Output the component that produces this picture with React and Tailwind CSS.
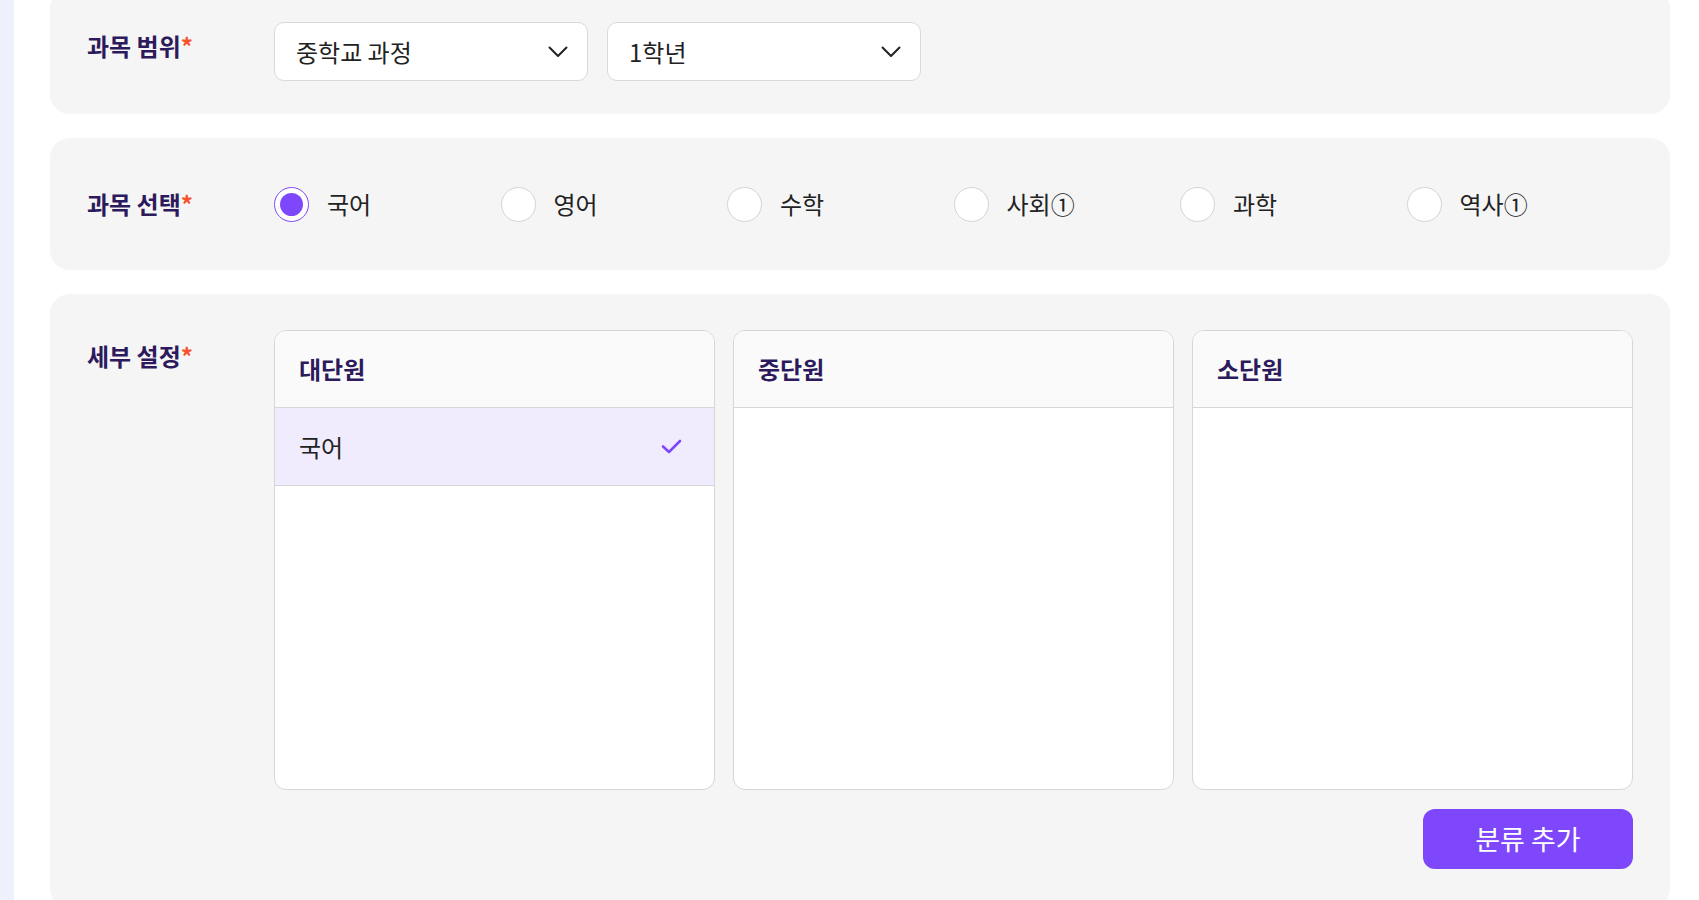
import { useState } from 'react';

const subjects = ['국어', '영어', '수학', '사회①', '과학', '역사①'];
const columns = ['대단원', '중단원', '소단원'];

function Chevron() {
  return (
    <svg width="20" height="12" viewBox="0 0 20 12" fill="none">
      <path d="M1.5 1.5 L10 10 L18.5 1.5" stroke="#222" strokeWidth="2" strokeLinecap="round" strokeLinejoin="round" />
    </svg>
  );
}

function Check() {
  return (
    <svg width="21" height="15" viewBox="0 0 21 15" fill="none">
      <path d="M2 7.5 L8 13 L19 2" stroke="#7f47fb" strokeWidth="2.6" strokeLinecap="round" strokeLinejoin="round" />
    </svg>
  );
}

function Label({ children, className = '' }) {
  return (
    <div className={`w-[187px] shrink-0 text-[24px] leading-[30px] font-semibold text-[#2d1a5c] ${className}`}>
      {children}
      <span className="text-[#f5532d]">*</span>
    </div>
  );
}

function Select({ value }) {
  return (
    <button
      type="button"
      className="flex h-[59px] w-[314px] items-center justify-between rounded-[10px] border border-[#d9d9d9] bg-white pl-[21px] pr-[19px] text-[24px] text-[#222]"
    >
      <span>{value}</span>
      <Chevron />
    </button>
  );
}

export default function App() {
  const [subject, setSubject] = useState('국어');

  return (
    <div className="flex min-h-screen overflow-hidden bg-white font-['Noto_Sans_CJK_KR','Noto_Sans',sans-serif]">
      <div className="w-[14px] shrink-0 bg-[#edf1fb]" />

      <div className="-mt-[11px] flex flex-1 flex-col gap-[24px] pl-[36px] pr-[29px]">
        {/* 과목 범위 */}
        <div className="flex items-start rounded-[20px] bg-[#f5f5f5] py-[33px] pl-[37px]">
          <Label className="mt-[9px]">과목 범위</Label>
          <div className="flex gap-[19px]">
            <Select value="중학교 과정" />
            <Select value="1학년" />
          </div>
        </div>

        {/* 과목 선택 */}
        <div className="flex h-[132px] items-center rounded-[20px] bg-[#f5f5f5] pl-[37px]">
          <Label>과목 선택</Label>
          <div className="flex">
            {subjects.map((s) => {
              const on = s === subject;
              return (
                <button
                  key={s}
                  type="button"
                  onClick={() => setSubject(s)}
                  className="flex w-[226.5px] items-center gap-[18px] text-left"
                >
                  <span
                    className={`flex h-[35px] w-[35px] shrink-0 items-center justify-center rounded-full bg-white ${
                      on ? 'border-[1.5px] border-[#7f47fb]' : 'border border-[#d4d4d4]'
                    }`}
                  >
                    {on && <span className="h-[23px] w-[23px] rounded-full bg-[#7f47fb]" />}
                  </span>
                  <span className="text-[24px] text-[#222]">{s}</span>
                </button>
              );
            })}
          </div>
        </div>

        {/* 세부 설정 */}
        <div className="flex flex-1 items-start rounded-[20px] bg-[#f5f5f5] pb-[40px] pl-[37px] pr-[35px] pt-[36px]">
          <Label className="mt-[11px]">세부 설정</Label>
          <div className="flex flex-col items-end">
            <div className="grid grid-cols-[441px_441px_441px] gap-[18px]">
              {columns.map((c, i) => (
                <div key={c} className="h-[460px] overflow-hidden rounded-[12px] border border-[#d6d6d6] bg-white">
                  <div className="flex h-[77px] items-center border-b border-[#d6d6d6] bg-[#fafafa] px-[24px] text-[24px] font-semibold text-[#2d1a5c]">
                    {c}
                  </div>
                  {i === 0 && (
                    <div className="flex h-[78px] items-center justify-between border-b border-[#d6d6d6] bg-[#f0ecfd] pl-[24px] pr-[32px] text-[24px] text-[#222]">
                      <span>국어</span>
                      <Check />
                    </div>
                  )}
                </div>
              ))}
            </div>
            <button
              type="button"
              className="mt-[19px] flex h-[60px] w-[210px] items-center justify-center rounded-[12px] bg-[#7f47fb] text-[27px] text-white"
            >
              분류 추가
            </button>
          </div>
        </div>
      </div>
    </div>
  );
}
